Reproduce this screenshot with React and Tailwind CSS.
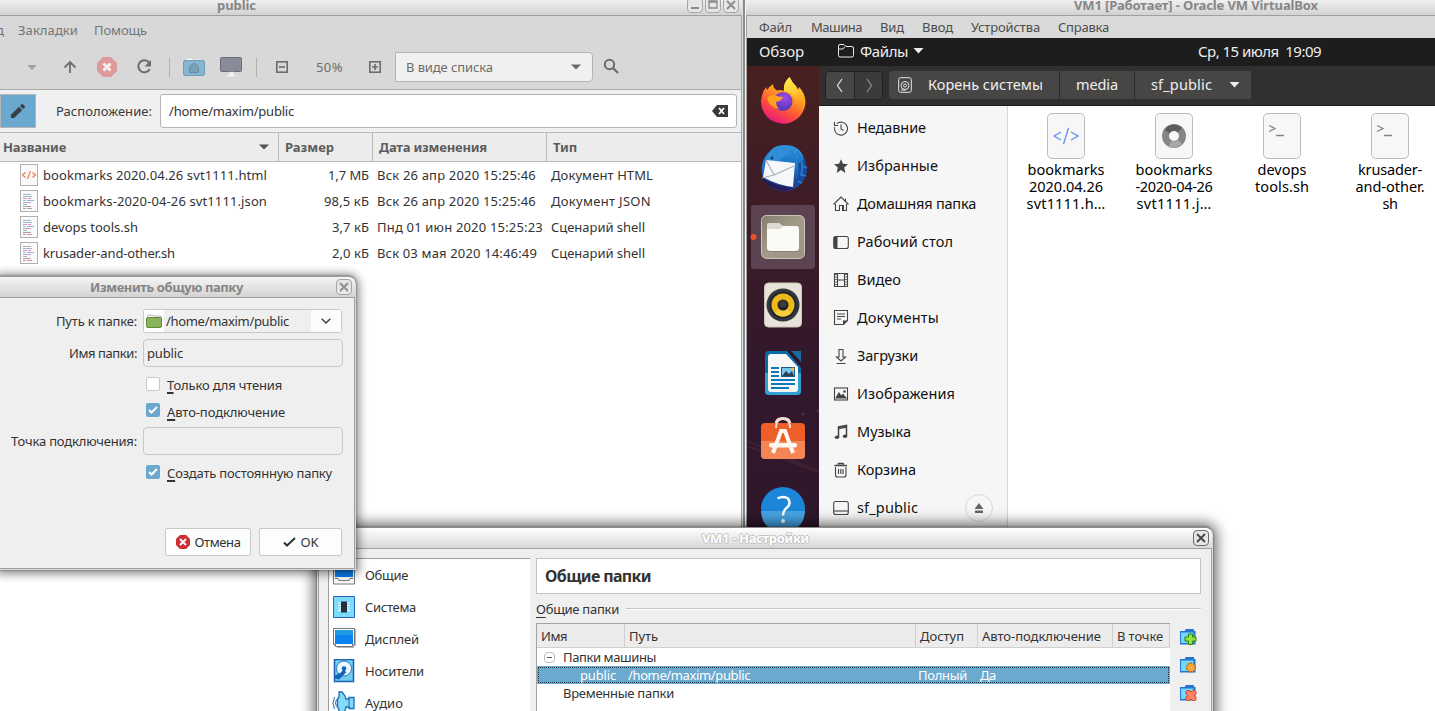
import React, { useLayoutEffect, useRef, useState } from "react";

// Text run whose tracking is tuned so that it spans exactly `w` pixels.
// Small UI text sits slightly low on its line; `flat` turns that off.
function T({ w, flat, className = "", children }) {
  const ref = useRef(null);
  const [spacing, setSpacing] = useState(0);
  useLayoutEffect(() => {
    const range = document.createRange();
    range.selectNodeContents(ref.current);
    const natural = range.getBoundingClientRect().width;
    setSpacing((w - natural) / ref.current.textContent.length);
  }, [w]);
  return (
    <span ref={ref} className={"block shrink-0 whitespace-pre " + (flat ? "" : "pt-[2px] ") + className} style={{ letterSpacing: spacing + "px" }}>
      {children}
    </span>
  );
}

function TitleButton({ dark, children }) {
  return (
    <span className={"flex h-4 w-4 items-center justify-center rounded border bg-[#e6e6e6] " + (dark ? "border-[#6b6b6b] text-[#444]" : "border-[#a5a5a5] text-[#8b8b8b]")}>
      <svg width="14" height="14" viewBox="0 0 14 14" fill="none" stroke="currentColor" strokeWidth="2">{children}</svg>
    </span>
  );
}
const Cross = () => <path d="M3 3l8 8M11 3l-8 8" strokeWidth="1.8" />;

/* ---------- file manager ---------- */

const files = [
  ["html", "bookmarks 2020.04.26 svt1111.html", 224, "1,7 МБ", 41, "Вск 26 апр 2020 15:25:46", 159, "Документ HTML", 102],
  ["text", "bookmarks-2020-04-26 svt1111.json", 224, "98,5 кБ", 45, "Вск 26 апр 2020 15:25:46", 159, "Документ JSON", 100],
  ["text", "devops tools.sh", 95, "3,7 кБ", 37, "Пнд 01 июн 2020 15:25:23", 166, "Сценарий shell", 94],
  ["text", "krusader-and-other.sh", 132, "2,0 кБ", 37, "Вск 03 мая 2020 14:46:49", 160, "Сценарий shell", 94],
];

function FileIcon({ kind }) {
  return (
    <svg className="shrink-0" width="18" height="22" viewBox="0 0 18 22" fill="none">
      <rect x=".5" y=".5" width="17" height="21" fill="#fafafa" stroke="#b0b0b0" />
      {kind === "html" ? (
        <path d="M5.500 8.500L2.500 11l3 2.500M12.500 8.500l3 2.500-3 2.500M10.500 7l-3 8" stroke="#f0763f" strokeWidth="1.100" />
      ) : (
        <g strokeWidth="1">
          <path d="M3 4.500h8M3 6.500h9M3 14.500h4" stroke="#9db6cc" />
          <path d="M3 8.500h4M8 8.500h3M3 12.500h8" stroke="#d795ca" />
          <path d="M7 10.500h7M4 12.500h2" stroke="#8db9d8" />
          <path d="M3 10.500h3M3 14.500h2" stroke="#8fd39b" />
          <path d="M3 16.500h8M3 18.500h3M7 18.500h5" stroke="#bd9aa2" />
        </g>
      )}
    </svg>
  );
}

function FileManager() {
  return (
    <div className="absolute top-0 left-0 flex h-[711px] w-[743px] flex-col border-r border-[#dedede] bg-white text-[13px] text-[#333]">
      <div className="flex h-4 shrink-0 items-center border-b border-[#a0a0a0] bg-linear-to-b from-[#f0f0f0] to-[#d2d2d2] pl-[217px]">
        <T w={39} className="-mt-[5px] font-bold text-[#868686]">public</T>
        <div className="ml-[431px] -mt-[5px] flex gap-[2px]">
          <TitleButton><path d="M3 10h8" /></TitleButton>
          <TitleButton><path d="M3 3h8v7H3zM3 4h8" strokeWidth="1.300" /></TitleButton>
          <TitleButton><Cross /></TitleButton>
        </div>
      </div>
      <div className="flex min-h-0 grow flex-col border-r border-[#a3a3a3]">
        <div className="flex h-7 shrink-0 items-center bg-[#d8d8d8] text-[#757575]">
          <T w={6} className="-ml-1">д</T>
          <T w={60} className="ml-4">Закладки</T>
          <T w={53} className="ml-4">Помощь</T>
        </div>
        <div className="flex h-[46px] shrink-0 items-center border-b border-[#ababab] bg-[#d8d8d8] text-[#6c6c6c]">
          <svg className="shrink-0" width="316" height="44" viewBox="0 44 316 44" fill="none" stroke="#6c6c6c" strokeWidth="2">
            <path d="M27 64h10l-5 5z" fill="#a2a2a2" stroke="none" />
            <path d="M70 72V61M64.500 66.500L70 61l5.500 5.500" strokeWidth="1.800" />
            <path d="M103 56h8l6 6v8l-6 6h-8l-6-6v-8z" fill="#dd9b9b" stroke="none" />
            <path d="M103.500 62.500l7 7M110.500 62.500l-7 7" stroke="#f3efef" strokeWidth="3" />
            <path d="M149 61.500A6 6 0 1 0 149.700 68" />
            <path d="M151 59v6.500h-6.500z" fill="#6c6c6c" stroke="none" />
            <path d="M169.500 57v19M256.500 57v19" stroke="#b1b1b1" strokeWidth="1" />
            <path d="M186 58l1-1h5l1 1h9v4h-17z" fill="#f8f8f8" stroke="#c2c2c2" strokeWidth=".6" />
            <rect x="183.500" y="59.500" width="21" height="15" rx="1.500" fill="#89b5d0" stroke="#6a9fbd" strokeWidth="1" />
            <path d="M189.500 66l4.500-4 4.500 4v5.500h-9z" fill="#78a1b8" stroke="#628da6" strokeWidth="1" />
            <rect x="220.500" y="56.500" width="21" height="14" rx="1" fill="#888c98" stroke="#686d79" strokeWidth="1" />
            <path d="M229 71h5v3h2v2h-10v-2h3z" fill="#f4f2f6" stroke="#cfc5d2" strokeWidth=".5" />
            <rect x="276.800" y="60.800" width="10.400" height="10.400" strokeWidth="1.600" />
            <path d="M279 66h6" strokeWidth="1.600" />
          </svg>
          <T w={27}>50%</T>
          <svg className="shrink-0" width="52" height="44" viewBox="343 44 52 44" fill="none" stroke="#6c6c6c" strokeWidth="1.600">
            <rect x="369.800" y="60.800" width="10.400" height="10.400" />
            <path d="M372 66h6M375 63v6" />
          </svg>
          <div className="flex h-[30px] w-[198px] items-center justify-between rounded-r-sm border border-[#b4b4b4] bg-[#f0f0f0] pr-[10px] pl-[10px]">
            <T w={87}>В виде списка</T>
            <svg width="11" height="6" viewBox="0 0 11 6"><path d="M0 .5h10l-5 5z" fill="#686868" /></svg>
          </div>
          <svg className="ml-[10px]" width="17" height="17" viewBox="0 0 17 17" fill="none" stroke="#6c6c6c" strokeWidth="2"><circle cx="6.500" cy="6.500" r="4.700" /><path d="M10 10l5 5" strokeWidth="2.300" /></svg>
        </div>
        <div className="flex h-[42px] shrink-0 items-center bg-[#f0f0f0]">
          <div className="flex h-[34px] w-9 items-center justify-center border border-[#b5b5b5] bg-[#6aa8cf]">
            <svg width="16" height="16" viewBox="0 0 16 16" fill="#3a3f44"><path d="M1 15v-3.200l8-8 3.200 3.200-8 8zM10 2.800l1.600-1.600q.6-.6 1.200 0l2 2q.6.6 0 1.200L13.200 6z" /></svg>
          </div>
          <T w={96} className="ml-[20px] text-[#3a3a3a]">Расположение:</T>
          <div className="ml-2 flex h-[34px] w-[577px] shrink-0 items-center justify-between rounded-[3px] border border-[#b5b5b5] bg-white pr-2 pl-2">
            <T w={125}>/home/maxim/public</T>
            <svg width="16" height="12" viewBox="0 0 16 12"><path d="M5 0h11v12H5L0 6z" fill="#3a3a3a" /><path d="M7 3l5 6M12 3l-5 6" stroke="#fff" strokeWidth="1.800" /></svg>
          </div>
        </div>
        <div className="flex h-[30px] shrink-0 items-stretch border-y border-[#b9b9b9] bg-[#ececec] font-bold text-[#5c5c5c]">
          <div className="flex w-[279px] items-center justify-between border-r border-[#b9b9b9] pr-[8px] pl-[3px]">
            <T w={63}>Название</T>
            <svg width="11" height="6" viewBox="0 0 11 6"><path d="M0 .5h10l-5 5z" fill="#555" /></svg>
          </div>
          <div className="flex w-[94px] items-center border-r border-[#b9b9b9] pl-[6px]"><T w={49}>Размер</T></div>
          <div className="flex w-[174px] items-center border-r border-[#b9b9b9] pl-[6px]"><T w={108}>Дата изменения</T></div>
          <div className="flex items-center pl-[6px]"><T w={24}>Тип</T></div>
        </div>
        {files.map(([kind, name, nw, size, sw, date, dw, type, tw]) => (
          <div key={name} className="flex h-[26px] shrink-0 items-center">
            <div className="flex w-[279px] items-center gap-[5px] pl-5"><FileIcon kind={kind} /><T w={nw}>{name}</T></div>
            <div className="flex w-[90px] justify-end"><T w={sw}>{size}</T></div>
            <div className="w-[175px] pl-[8px]"><T w={dw}>{date}</T></div>
            <div className="pl-[7px]"><T w={tw}>{type}</T></div>
          </div>
        ))}
      </div>
    </div>
  );
}

/* ---------- virtual machine ---------- */

function Dock() {
  return (
    <svg className="shrink-0" width="72" height="673" viewBox="747 66 72 673" fill="none">
      <defs>
        <linearGradient id="dock" x1="0" y1="0" x2="0" y2="1"><stop offset="0" stopColor="#49201f" /><stop offset=".22" stopColor="#3c1c27" /><stop offset=".45" stopColor="#32182c" /><stop offset="1" stopColor="#2b152c" /></linearGradient>
        <linearGradient id="fox" x1=".8" y1="0" x2=".3" y2="1"><stop offset="0" stopColor="#ffe63c" /><stop offset=".4" stopColor="#ff9a1f" /><stop offset=".72" stopColor="#ff4a40" /><stop offset="1" stopColor="#e31587" /></linearGradient>
        <linearGradient id="flame" x1="0" y1="0" x2=".3" y2="1"><stop offset="0" stopColor="#fff14a" /><stop offset=".6" stopColor="#ffc832" /><stop offset="1" stopColor="#ff9a2a" stopOpacity="0" /></linearGradient>
        <radialGradient id="globe" cx=".6" cy=".3" r=".7"><stop offset="0" stopColor="#a149e8" /><stop offset="1" stopColor="#5437b5" /></radialGradient>
        <linearGradient id="bird" x1="0" y1="0" x2="0" y2="1"><stop offset="0" stopColor="#2694e0" /><stop offset=".6" stopColor="#1c62b5" /><stop offset="1" stopColor="#222b78" /></linearGradient>
        <linearGradient id="taupe" x1="0" y1="0" x2="1" y2="1"><stop offset="0" stopColor="#857d6b" /><stop offset=".5" stopColor="#a49c8a" /><stop offset="1" stopColor="#9b9482" /></linearGradient>
      </defs>
      <path d="M747 66h72v673h-72z" fill="url(#dock)" />
      <path d="M747 441l72 30M747 446l72 26" stroke="#3f2030" strokeWidth="2" />
      <circle cx="803" cy="414" r="1.500" fill="#4a3346" /><circle cx="818" cy="411" r="1.500" fill="#4a3346" />

      <path d="M761 101Q762 92 766 87l1 3Q770 86 773 84q0 4 4 6.500 4-1 7 .5-1-8 5.500-14 2 5 6.500 9l2 4 1-3q6 6 6.500 15A22.200 22.200 0 0 1 761 101z" fill="url(#fox)" />
      <path d="M784 91q-1-8 5.500-14 3 6 7.500 11 5 9 2 18-3 6-9 7 6-6 5-14-3-7-11-8z" fill="url(#flame)" />
      <circle cx="783" cy="101.500" r="9.500" fill="url(#globe)" />
      <path d="M767 98q3-3 8-3 3 2 8 2-1 4-7 5 0 4 3 7-10-2-12-11z" fill="#ffa01e" />

      <circle cx="784" cy="169" r="22.500" fill="url(#bird)" />
      <path d="M766 160q3-14 17-15 16-1 21 13-7-6-15-4-8 3-14 12z" fill="#2e8ed6" />
      <path d="M798 164q4 12-6 25 12-4 15-17l-2-14z" fill="#174a9c" />
      <path d="M797 152q8 9 4 24M791 151q8 8 5 18" stroke="#257ccc" strokeWidth="2" />
      <path d="M803 166l4 2M801 174l5 2M798 181l4 2" stroke="#2c78cc" strokeWidth="1.500" />
      <path d="M766 160l29 3-2 24q-16-2-30-10z" fill="#f6f7f9" />
      <path d="M766 160l8 15 20-9M762 178l12-3" stroke="#a9adb7" strokeWidth="1.100" />
      <path d="M762 178q14 8 30 10l-6 3q-17-1-24-13z" fill="#251b59" />
      <circle cx="772" cy="158" r="1.500" fill="#173a60" />

      <rect x="751" y="205" width="64" height="64" rx="3" fill="#5d4251" />
      <circle cx="753.500" cy="237" r="3" fill="#e95420" />
      <rect x="761.500" y="215.500" width="43" height="43" rx="5" fill="url(#taupe)" stroke="#cbc6b9" />
      <path d="M770 224h9l5 4h12q3 0 3 3v18q0 3-3 3h-26q-3 0-3-3v-22q0-3 3-3z" fill="#736c5e" opacity=".55" />
      <path d="M770 223h8q2 0 3 2l2 1h13q3 0 3 3v19q0 3-3 3h-26q-3 0-3-3v-22q0-3 3-3z" fill="#fbfaf7" />
      <path d="M767 229h13l3-3h-2q-1-3-3-3h-8q-3 0-3 3z" fill="#dcd9d2" />

      <rect x="764.500" y="283" width="37" height="44" rx="4" fill="#e8e3d8" stroke="#cbc5b9" />
      <circle cx="783" cy="305" r="16.500" fill="#33383f" /><circle cx="783" cy="305" r="13.500" fill="#20242b" /><circle cx="783" cy="305" r="11.500" fill="#eeb91b" /><path d="M775 313a11 11 0 0 0 16 0l-8-8z" fill="#f7cf3e" /><circle cx="783" cy="305" r="5.500" fill="#242424" /><circle cx="783" cy="304" r="3.500" fill="#3c3c3e" />

      <rect x="765" y="351" width="36" height="44" rx="4" fill="#0c6ba5" />
      <path d="M765 373h36v18q0 4-4 4h-28q-4 0-4-4z" fill="#32a0d4" />
      <path d="M787 351h4l10 11v6z" fill="#30172b" />
      <path d="M792 351h9v10z" fill="#1b6c9f" />
      <path d="M771 354h15l12 13v22q0 3-3 3h-24q-3 0-3-3v-32q0-3 3-3z" fill="#f7f7f7" />
      <path d="M771 368h8M771 372h8M771 376h8M771 380h24M771 384h24M771 388h18" stroke="#0c79bd" strokeWidth="2" />
      <rect x="781.500" y="367.500" width="13" height="9" fill="#76c6ef" stroke="#24577c" /><path d="M782 376l4-5 3 3 3-3 2 5z" fill="#284258" /><circle cx="793" cy="369" r="1.500" fill="#f4bb33" />

      <path d="M776 427q-2-9 7-9t7 9" stroke="#f2ded0" strokeWidth="2" />
      <rect x="761" y="423" width="44" height="36" rx="4" fill="#ee5e27" /><path d="M761 441h44v14q0 4-4 4h-36q-4 0-4-4z" fill="#f48555" />
      <path d="M776 428v-2q1-7 7-7t7 7v2" stroke="#f2ded0" strokeWidth="2" />
      <path d="M773 453l8-22h4l8 22" stroke="#fff7f2" strokeWidth="4" /><rect x="769" y="443" width="28" height="4.500" rx="2" fill="#fff7f2" />

      <circle cx="783" cy="509" r="22" fill="#1c86d8" /><path d="M761 511h44q-1 20-22 20t-22-20z" fill="#46a5e4" />
      <path d="M777.500 498.500q6-3 10.500 0 3.500 5-1 9-4 3-4 8" stroke="#fff" strokeWidth="2.500" /><circle cx="783" cy="521" r="2" fill="#fff" />
    </svg>
  );
}

const sideIcons = {
  recent: <><path d="M4 3.500A6.500 6.500 0 1 1 1.500 9" /><path d="M1.500 2v3.500H5M8 4.500V9l2.500 1.500M1 7.500l1 1" /></>,
  star: <path d="M8 1.200l2 4.500 5 .5-3.800 3.300L12.300 15 8 12l-4.300 3 1.100-5.500L1 6.200l5-.5z" fill="#444" stroke="none" />,
  home: <><path d="M.5 8.500L8 1l7.500 7.500M12.500 5V2.500M2.500 8v6.500h4v-5h3v5h4V8" /><path d="M9 9h2v6H9z" fill="#444" stroke="none" /></>,
  desk: <><rect x=".7" y="2.500" width="14.600" height="12" rx="2" /><path d="M1 3h3.500v11H1z" fill="#444" stroke="none" /></>,
  video: <><path d="M1.500 1.500h13v13h-13zM4.500 2v12M11.500 2v12M5 8h6" /><path d="M3 2v12M13 2v12" strokeWidth="1.500" strokeDasharray="1 1.500" /></>,
  docs: <><path d="M1.500.5h13v10l-4 4h-9zM4 4h8M4 6.500h8M4 9h4" /><path d="M10 15v-4.500h5z" fill="#444" stroke="none" /></>,
  down: <path d="M6 1.500h4V9h2.500L8 13 3.500 9H6zM3.500 15.500h9" />,
  image: <><rect x="1.500" y="2" width="13" height="12" /><path d="M3 12l3-5 2 3 2-1.500 3 3.500z" fill="#444" /><circle cx="11.500" cy="5.500" r="1.300" fill="#444" stroke="none" /></>,
  music: <><path d="M5.500 13V2.800L13.500 1.500V12M5.500 4.500l8-1.500" strokeWidth="1.500" /><ellipse cx="4" cy="13.300" rx="2.200" ry="1.800" fill="#444" stroke="none" /><ellipse cx="12" cy="12.300" rx="2.200" ry="1.800" fill="#444" stroke="none" /></>,
  trash: <><path d="M2.500 5v8q0 2 2 2h6.500q2 0 2-2V5M5.500 7v5M7.800 7v5M10 7v5" /><path d="M1.500 3.500h12.500M5.500 2.500v-1h4.500v1" strokeWidth="1.700" /></>,
  disk: <><rect x=".7" y="1.500" width="14.600" height="13" rx="2" /><path d="M1 11h14" /></>,
};

const places = [
  ["recent", "Недавние", 69], ["star", "Избранные", 81], ["home", "Домашняя папка", 119], ["desk", "Рабочий стол", 96],
  ["video", "Видео", 44], ["docs", "Документы", 82], ["down", "Загрузки", 61], ["image", "Изображения", 98],
  ["music", "Музыка", 54], ["trash", "Корзина", 59], ["disk", "sf_public", 61],
];

const icons = [
  ["html", [["bookmarks", 77], ["2020.04.26", 74], ["svt1111.h…", 79]]],
  ["json", [["bookmarks", 77], ["-2020-04-26", 77], ["svt1111.j…", 75]]],
  ["sh", [["devops", 49], ["tools.sh", 54]]],
  ["sh", [["krusader-", 64], ["and-other.", 69], ["sh", 15]]],
];

function DesktopFile({ kind, lines }) {
  return (
    <div className="flex w-[108px] shrink-0 flex-col items-center text-[14.500px] leading-[17px] text-black">
      <svg className="mb-px" width="40" height="48" viewBox="0 0 40 48" fill="none">
        <rect x="1.500" y="1.500" width="37" height="45" rx="4.500" fill="#f7f7f7" stroke="#bdbdbd" />
        {kind === "html" && <path d="M15 20l-7 4 7 4M25 20l7 4-7 4M22.500 16l-5 16" stroke="#5e8df5" strokeWidth="1.300" />}
        {kind === "json" && <><circle cx="20" cy="24" r="8.500" stroke="#858585" strokeWidth="7" /><path d="M13 19.500a8.500 8.500 0 0 1 13-1.500" stroke="#5c5c5c" strokeWidth="6" /><path d="M26 30a8.500 8.500 0 0 1-10 1.500" stroke="#a8a8a8" strokeWidth="6" /></>}
        {kind === "sh" && <path d="M7 13.500l6 3-6 3M14 23.500h8" stroke="#858585" strokeWidth="1.300" />}
      </svg>
      {lines.map(([s, w]) => <T flat key={s} w={w}>{s}</T>)}
    </div>
  );
}

function VirtualMachine() {
  return (
    <div className="absolute top-0 left-[745px] flex h-[711px] w-[690px] flex-col border-l border-[#f5f5f5] bg-white text-[13px] shadow-[-2px_0_0_#8a8a8a]">
      <div className="h-4 shrink-0 border-b border-[#a0a0a0] bg-linear-to-b from-[#f0f0f0] to-[#d2d2d2] pl-[328px]">
        <T flat w={244} className="-mt-[4px] font-bold text-[#868686]">VM1 [Работает] - Oracle VM VirtualBox</T>
      </div>
      <div className="flex min-h-0 grow flex-col border-l border-[#a0a0a0]">
        <div className="flex h-[22px] shrink-0 items-center bg-[#dadada] pl-3 text-[#4c4c4c]">
          <T w={33}>Файл</T><T w={51} className="ml-[19px]">Машина</T><T w={24} className="ml-[18px]">Вид</T>
          <T w={31} className="ml-[18px]">Ввод</T><T w={69} className="ml-[18px]">Устройства</T><T w={51} className="ml-[18px]">Справка</T>
        </div>
        <div className="flex h-7 shrink-0 items-center bg-[#1d1d1d] pb-[2px] pl-3 text-[15px] text-[#eee]">
          <T flat w={45}>Обзор</T>
          <svg className="ml-[33px]" width="18" height="16" viewBox="0 0 18 16" fill="none" stroke="#e8e8e8"><path d="M1.500 3q0-1.500 1.500-1.500h4l2 2h6q1.500 0 1.500 1.500v7.500q0 1.500-1.500 1.500h-12q-1.500 0-1.500-1.500zM2 6h4l2-2.500" /></svg>
          <T flat w={48} className="ml-[5px]">Файлы</T>
          <svg className="ml-[5px]" width="11" height="6" viewBox="0 0 11 6"><path d="M.5 0h10l-5 5.500z" fill="#eee" /></svg>
          <T flat w={123} className="ml-[274px]">Ср, 15 июля  19:09</T>
        </div>
        <div className="flex min-h-0 grow">
          <Dock />
          <div className="flex min-w-0 grow flex-col">
            <div className="flex h-10 shrink-0 items-center border-b border-[#1a1a1a] bg-[#312f2f] pb-px pl-[6px] text-[14.500px] text-[#eee]">
              <div className="flex h-[29px] w-[58px] overflow-hidden rounded border border-[#222]">
                <svg width="56" height="27" viewBox="0 0 56 27" fill="none"><path d="M0 0h28v27H0z" fill="#474645" /><path d="M28 0h28v27H28z" fill="#3c3b3b" /><path d="M28.500 0v27" stroke="#222" /><path d="M16 7l-4.500 6.500L16 20" stroke="#ddd" strokeWidth="1.300" /><path d="M41 7l4.500 6.500L41 20" stroke="#8b8b8b" strokeWidth="1.300" /></svg>
              </div>
              <div className="ml-[6px] flex h-7 items-center rounded-l bg-[#474645]">
                <svg className="ml-[9px]" width="14" height="16" viewBox="0 0 14 16" fill="none" stroke="#e8e8e8"><rect x=".7" y=".7" width="12.600" height="14.600" rx="2" /><circle cx="7" cy="8.500" r="4" /><circle cx="7" cy="8.500" r="1.500" /><path d="M3 13h5" /></svg>
                <T flat w={115} className="mr-[16px] ml-[16px] pb-px">Корень системы</T>
                <div className="flex h-7 items-center border-x border-[#2c2b2b] px-4"><T flat w={42} className="pb-px">media</T></div>
                <T flat w={61} className="ml-[16px] pb-px">sf_public</T>
                <svg className="mr-[11px] ml-[17px]" width="11" height="6" viewBox="0 0 11 6"><path d="M.5 0h10l-5 5.500z" fill="#eee" /></svg>
              </div>
            </div>
            <div className="flex min-h-0 grow">
              <div className="flex w-[189px] shrink-0 flex-col border-r border-[#d5d5d5] bg-[#f6f6f6] pt-[3px] text-[14.500px] text-[#111]">
                {places.map(([icon, name, w]) => (
                  <div key={icon} className="flex h-[38px] shrink-0 items-center pl-[14px]">
                    <svg className="mr-2 shrink-0" width="16" height="16" viewBox="0 0 16 16" fill="none" stroke="#444" strokeWidth="1.100">{sideIcons[icon]}</svg>
                    <T flat w={w}>{name}</T>
                    {icon === "disk" && (
                      <span className="ml-[47px] flex h-7 w-7 items-center justify-center rounded-full border border-[#d6d6d6]">
                        <svg width="10" height="10" viewBox="0 0 10 10" fill="#666"><path d="M5 0l4.500 6h-9zM1 7.500h8V10H1z" /></svg>
                      </span>
                    )}
                  </div>
                ))}
              </div>
              <div className="flex pt-[6px] pl-1">
                {icons.map(([kind, lines], i) => <DesktopFile key={i} kind={kind} lines={lines} />)}
              </div>
            </div>
          </div>
        </div>
      </div>
    </div>
  );
}

/* ---------- VM settings ---------- */

const monitor = <><path d="M2 2h22v17h-2v2H5v-2H2z" fill="#b5b5b5" /><path d="M1.500 1.500h21v16h-2v2h-17v-2h-2z" fill="#fff" stroke="#777" /><path d="M3 3h18v14H3z" fill="#0a83f0" /><path d="M3 3h18v5H3z" fill="#1e9ae4" /></>;
const sections = [
  ["Общие", 43, <><path d="M1.500 0v21h21V0" fill="#fff" stroke="#777" /><path d="M3 0h18v14H3z" fill="#0a80f0" /><path d="M3 15.500h3l1 2h10l1-2h3" stroke="#777" fill="none" /></>],
  ["Система", 51, <><path d="M1.500 1.500h21v21h-21z" fill="#7cdafa" stroke="#2266b5" /><path d="M6 8h12M6 10.500h12M6 13h12M6 15.500h12" stroke="#fff" /><path d="M9 6.500h6v11H9z" fill="#26313c" /></>],
  ["Дисплей", 54, monitor],
  ["Носители", 59, <><path d="M2.500.5h19v22h-19z" fill="#72cdf6" stroke="#1c5fae" strokeWidth="1.500" /><circle cx="12" cy="9.500" r="7.500" fill="#eaf9ff" stroke="#2b76bd" /><path d="M12 9.500l2 4-7 7-4-1v-3l6-3z" fill="#1264b4" /><circle cx="12" cy="9.500" r="2.300" fill="#1264b4" /></>],
  ["Аудио", 38, <><path d="M5.500 8q2-1 1.500-7h3q3 3 4 7h3V6.500h5v11h-5V16h-3q-1 5-4 8H7q.5-6-1.500-8z" fill="#86daf9" stroke="#1e6bbb" strokeWidth="1.300" /><path d="M2.500 6q-3 6 0 12M4.500 8.500q-2 3.500 0 7M17 8v8" fill="none" stroke="#1e6bbb" /></>],
];

function FolderTool({ children }) {
  return (
    <svg width="18" height="18" viewBox="0 0 18 18">
      <path d="M1 3h4.500L7 1h8v2h1.500v13.500H1z" fill="#2574d0" /><path d="M2 4.500h12.500V15H2z" fill="#72d7f8" />{children}
    </svg>
  );
}

function Settings() {
  return (
    <div className="absolute top-[527px] left-[317px] flex h-[200px] w-[896px] flex-col rounded-t-lg border border-[#dcdcdc] border-t-[#8c8c8c] bg-[#efefef] text-[13px] text-[#333] shadow-[0_0_2px_rgba(0,0,0,0.6),0_0_13px_4px_rgba(0,0,0,0.55)]">
      <div className="flex h-[21px] shrink-0 items-center rounded-t-md border-b border-[#a0a0a0] bg-linear-to-b from-white to-[#d8d8d8] pr-[3px] pl-[384px]">
        <T w={107} className="font-bold text-white [text-shadow:1px_0_#c0c0c0,-1px_0_#c0c0c0,0_1px_#c0c0c0,0_-1px_#c0c0c0]">VM1 - Настройки</T>
        <div className="ml-auto"><TitleButton dark><Cross /></TitleButton></div>
      </div>
      <div className="flex min-h-0 grow border-x border-[#a0a0a0] pt-[9px] pl-[9px]">
        <div className="flex w-[202px] shrink-0 flex-col border-t border-l border-[#9e9e9e] bg-white">
          {sections.map(([name, w, art]) => (
            <div key={name} className="flex h-8 shrink-0 items-center pl-[3px]">
              <svg className="mr-2 shrink-0" width="25" height="24" viewBox="0 0 25 24">{art}</svg><T w={w}>{name}</T>
            </div>
          ))}
        </div>
        <div className="ml-[6px] w-[665px]">
          <div className="flex h-9 items-center border border-[#c2c2c2] bg-white pl-2"><T flat w={106} className="text-[16px] font-bold">Общие папки</T></div>
          <div className="flex h-[29px] items-center gap-[7px]"><T w={83}><span className="underline underline-offset-3">О</span>бщие папки</T><div className="h-[2px] grow border-t border-[#c4c4c4] bg-white" /></div>
          <div className="flex">
            <div className="h-[90px] w-[634px] border-t border-l border-[#a3a3a3] bg-white">
              <div className="flex h-6 items-stretch border-r border-b border-[#d0d0d0] bg-[#ececec]">
                <div className="flex w-[88px] items-center border-r border-[#d0d0d0] pl-1"><T w={26}>Имя</T></div>
                <div className="flex w-[291px] items-center border-r border-[#d0d0d0] pl-1"><T w={29}>Путь</T></div>
                <div className="flex w-[62px] items-center border-r border-[#d0d0d0] pl-1"><T w={44}>Доступ</T></div>
                <div className="flex w-[135px] items-center border-r border-[#d0d0d0] pl-1"><T w={119}>Авто-подключение</T></div>
                <div className="flex items-center pl-1"><T w={46}>В точке</T></div>
              </div>
              <div className="flex h-[18px] items-center pl-[7px]">
                <span className="mr-2 flex h-[11px] w-[11px] items-center justify-center rounded-sm border border-[#bdbdbd]"><span className="h-px w-[5px] bg-[#555]" /></span>
                <T w={93}>Папки машины</T>
              </div>
              <div className="h-[18px] bg-[#6ba9ce] px-px py-px">
                <div className="flex h-4 items-center border border-dotted border-[#234] pl-[41px] text-white">
                  <T w={36}>public</T><T w={122} className="ml-[12px]">/home/maxim/public</T><T w={49} className="ml-[168px]">Полный</T><T w={16} className="ml-[13px]">Да</T>
                </div>
              </div>
              <div className="flex h-[18px] items-center pl-[26px]"><T w={111}>Временные папки</T></div>
            </div>
            <div className="ml-[9px] flex flex-col gap-[10px] pt-[5px]">
              <FolderTool><path d="M9.500 6h4v3h3.500v4h-3.500v3.500h-4V13H6V9h3.500z" fill="#93e437" stroke="#2f8212" /></FolderTool>
              <FolderTool><circle cx="12" cy="11.500" r="4.300" fill="#ffb03b" stroke="#c8640e" strokeWidth="1.400" strokeDasharray="1.900 .8" /><circle cx="12" cy="11.500" r="1.400" fill="#ffe078" stroke="#c56d0e" strokeWidth=".6" /></FolderTool>
              <FolderTool><path d="M8 6.500h2.500L12 8l1.500-1.500H16l1 1V10l-1.500 1.500L17 13v2.500l-1 1h-2.500L12 15l-1.500 1.500H8l-1-1V13l1.500-1.500L7 10V7.500z" fill="#ff8064" stroke="#d33c20" strokeWidth=".9" /></FolderTool>
            </div>
          </div>
        </div>
      </div>
    </div>
  );
}

/* ---------- edit shared folder ---------- */

function Check({ on, label, w }) {
  return (
    <div className="flex items-center gap-[7px] pl-[146px]">
      <span className={"flex h-[14px] w-[14px] items-center justify-center rounded-[2px] " + (on ? "bg-[#6ba8ce]" : "border border-[#c9c9c9] bg-white")}>
        {on && <svg width="10" height="8" viewBox="0 0 10 8" fill="none" stroke="#fff" strokeWidth="2"><path d="M1 4l2.500 2.500L9 1" /></svg>}
      </span>
      <T w={w} className="-mb-[2px]"><span className="underline decoration-[1.500px] underline-offset-2">{label[0]}</span>{label.slice(1)}</T>
    </div>
  );
}

function Field({ label, w, children }) {
  return (
    <div className="flex items-center">
      <div className="flex w-[137px] justify-end"><T w={w}>{label}</T></div>
      <div className="ml-[6px]">{children}</div>
    </div>
  );
}

function EditDialog() {
  return (
    <div className="absolute top-[276px] left-[-1px] flex h-[294px] w-[357px] flex-col rounded-tr-lg border border-[#dadada] border-t-[#9c9c9c] bg-[#efefef] text-[13px] text-[#333] shadow-[0_0_2px_rgba(0,0,0,0.6),0_1px_10px_3px_rgba(0,0,0,0.45)]">
      <div className="flex h-[21px] shrink-0 items-center rounded-tr-md border-b border-[#a0a0a0] bg-linear-to-b from-[#f5f5f5] to-[#d3d3d3] pr-[3px] pl-[90px]">
        <T w={153} className="font-bold text-[#868686]">Изменить общую папку</T>
        <div className="ml-auto"><TitleButton><Cross /></TitleButton></div>
      </div>
      <div className="flex min-h-0 grow flex-col border-r border-b border-[#a0a0a0]">
        <div className="flex flex-col pt-[11px]">
          <Field label="Путь к папке:" w={81}>
            <div className="flex h-6 w-[199px] items-center rounded-[3px] border border-[#c8c8c8]">
              <svg className="shrink-0" width="20" height="22" viewBox="0 0 20 22"><path d="M0 0h20v22H0z" fill="#fff" /><path d="M4 5h5l1 1h7v4H3z" fill="#f6f6f6" stroke="#bbb" /><rect x="2.500" y="7.500" width="15" height="10" rx="1.500" fill="#8ab35c" stroke="#5d8b38" /></svg>
              <T w={123} className="ml-[2px]">/home/maxim/public</T>
              <div className="ml-auto flex h-[22px] w-[30px] items-center justify-center bg-[#fcfcfc]"><svg width="10" height="6" viewBox="0 0 10 6" fill="none" stroke="#444" strokeWidth="1.500"><path d="M.7.7L5 5 9.300.7" /></svg></div>
            </div>
          </Field>
          <div className="h-[6px]" />
          <Field label="Имя папки:" w={68}><div className="flex h-7 w-[200px] items-center rounded-[4px] border border-[#c8c8c8] pl-[3px]"><T w={36}>public</T></div></Field>
          <div className="h-[7px]" />
          <Check label="Только для чтения" w={115} />
          <div className="h-[7px]" />
          <Check on label="Авто-подключение" w={118} />
          <div className="h-[7px]" />
          <Field label="Точка подключения:" w={126}><div className="h-7 w-[200px] rounded-[4px] border border-[#c8c8c8]" /></Field>
          <div className="h-[7px]" />
          <Check on label="Создать постоянную папку" w={165} />
        </div>
        <div className="mt-auto mb-[12px] flex justify-end gap-2 pr-[12px]">
          <div className="flex h-7 w-[86px] items-center justify-center gap-[5px] rounded-[2px] border border-[#c8c8c8] bg-[#fcfefd]">
            <svg width="14" height="14" viewBox="0 0 14 14"><path d="M4 0h6l4 4v6l-4 4H4l-4-4V4z" fill="#cf2e32" /><path d="M4 4l6 6M10 4l-6 6" stroke="#fff" strokeWidth="2" /></svg>
            <T w={46}>Отмена</T>
          </div>
          <div className="flex h-7 w-[83px] items-center justify-center gap-[5px] rounded-[2px] border border-[#c8c8c8] bg-[#fcfefd]">
            <svg width="13" height="10" viewBox="0 0 13 10" fill="none" stroke="#333" strokeWidth="2"><path d="M1 5.500l3 3L12 1" /></svg>
            <T w={18}>OK</T>
          </div>
        </div>
      </div>
    </div>
  );
}

export default function App() {
  return (
    <div className="relative h-[711px] w-[1435px] overflow-hidden bg-white font-['Noto_Sans','Open_Sans',sans-serif]">
      <FileManager />
      <VirtualMachine />
      <Settings />
      <EditDialog />
    </div>
  );
}
